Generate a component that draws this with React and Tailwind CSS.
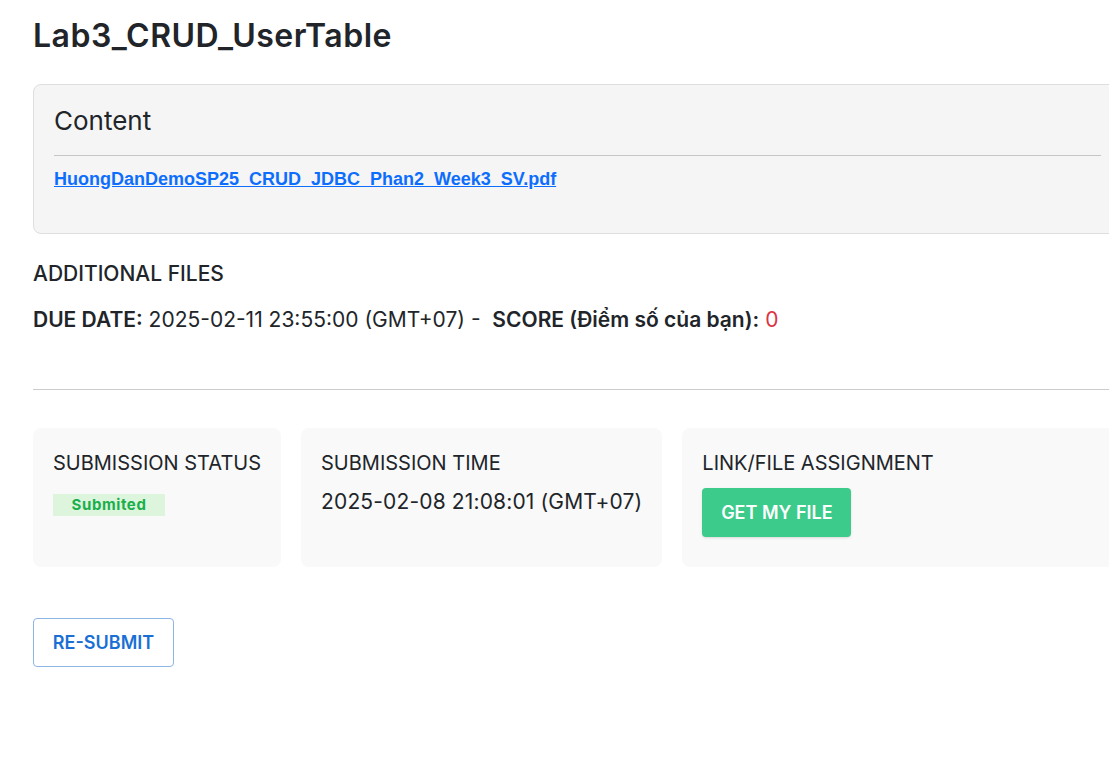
export default function App() {
  return (
    <div className="w-[1109px] h-[783px] overflow-hidden bg-white text-[#212529]" style={{ fontFamily: 'Inter, "Noto Sans", sans-serif' }}>
      <div className="w-[1089px] ml-[33px]">
        {/* Title */}
        <h1 className="pt-[18px] text-[32px] leading-[36px] font-semibold tracking-[0.5px]">Lab3_CRUD_UserTable</h1>

        {/* Content box */}
        <div className="mt-[30px] bg-[#f5f5f5] border border-[#dedede] rounded-lg px-5 pt-[21px] pb-[43px]">
          <h2 className="text-[26px] leading-[29px]">Content</h2>
          <hr className="mt-[20px] border-0 border-t border-[#c6c6c6]" />
          <a href="#" className="block mt-[13px] text-[18px] leading-[21px] font-bold text-[#0d6efd] underline" style={{ fontFamily: '"Liberation Sans", Arial, sans-serif' }}>
            HuongDanDemoSP25_CRUD_JDBC_Phan2_Week3_SV.pdf
          </a>
        </div>

        {/* Meta */}
        <p className="mt-[27px] text-[21px] leading-[26px] font-medium">ADDITIONAL FILES</p>
        <p className="mt-[20px] text-[21px] leading-[26px]">
          <span className="font-semibold">DUE DATE:</span> 2025-02-11 23:55:00 (GMT+07) -&nbsp;&nbsp;
          <span className="font-semibold">SCORE (Điểm số của bạn):</span> <span className="text-[#dc3545]">0</span>
        </p>

        <hr className="mt-[56px] border-0 border-t border-[#cccccc]" />

        {/* Cards */}
        <div className="mt-[38px] flex gap-5">
          <div className="h-[139px] bg-[#f9f9f9] rounded-lg px-5 pt-[21px]">
            <p className="text-[20px] leading-7 whitespace-nowrap">SUBMISSION STATUS</p>
            <span className="inline-block mt-[17px] h-[22px] w-[112px] bg-[#dcf5dc] text-center text-[15px] leading-[22px] font-bold tracking-[0.6px] text-[#1aae4c]">
              Submited
            </span>
          </div>
          <div className="h-[139px] bg-[#f9f9f9] rounded-lg px-5 pt-[21px]">
            <p className="text-[20px] leading-7 whitespace-nowrap">SUBMISSION TIME</p>
            <p className="mt-[11px] text-[21px] leading-7 tracking-[0.15px] whitespace-nowrap">2025-02-08 21:08:01 (GMT+07)</p>
          </div>
          <div className="flex-1 h-[139px] bg-[#f9f9f9] rounded-lg px-5 pt-[21px]">
            <p className="text-[20px] leading-7 whitespace-nowrap">LINK/FILE ASSIGNMENT</p>
            <button className="mt-[11px] h-[49px] w-[149px] rounded bg-[#3ccb8b] text-white text-[18px] font-semibold shadow-sm">
              GET MY FILE
            </button>
          </div>
        </div>

        {/* Re-submit */}
        <button className="mt-[51px] h-[49px] w-[141px] rounded border border-[#8db6e6] bg-white text-[#1a6fd4] text-[18px] font-semibold">
          RE-SUBMIT
        </button>
      </div>
    </div>
  )
}
